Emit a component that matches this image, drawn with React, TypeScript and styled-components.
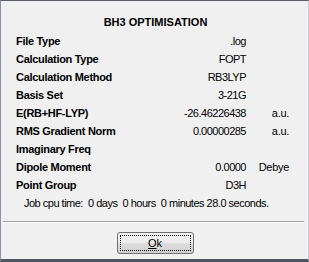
import { createGlobalStyle, styled } from "styled-components";

const GlobalStyle = createGlobalStyle`
	html, body {
		margin: 0;
		padding: 0;
		background: #f0f0f0;
	}
	body {
		font-family: "Liberation Sans", Arial, sans-serif;
		font-size: 11px;
		color: #000;
	}
`;

const Dialog = styled.div`
	box-sizing: border-box;
	width: 309px;
	height: 262px;
	background: #f0f0f0;
	border-top: 1px solid #5a5f66;
	border-left: 1px solid #8a94a0;
	border-right: 1px solid #c9ced4;
	border-bottom: 3px solid #4d5560;
	display: flex;
	flex-direction: column;
	padding-top: 12px;
`;

const Title = styled.div`
	height: 18px;
	line-height: 18px;
	text-align: center;
	font-weight: bold;
	padding-left: 2px;
`;

const Grid = styled.div`
	display: grid;
	grid-template-columns: 130px 1fr 43px;
	grid-auto-rows: 18px;
	align-items: center;
	padding: 1px 19px 0 15px;
	line-height: 18px;
`;

const Label = styled.div`
	font-weight: bold;
	letter-spacing: -0.3px;
	white-space: nowrap;
`;

const Value = styled.div`
	text-align: right;
	letter-spacing: -0.5px;
	white-space: nowrap;
`;

const Unit = styled.div`
	text-align: right;
	letter-spacing: -0.3px;
	white-space: nowrap;
`;

const CpuLine = styled.div`
	height: 18px;
	line-height: 18px;
	padding-left: 23px;
	letter-spacing: -0.5px;
	white-space: pre;
`;

const Separator = styled.div`
	margin: 9px 4px 0 2px;
	height: 1px;
	background: #a0a0a0;
	border-bottom: 1px solid #fff;
`;

const Footer = styled.div`
	display: flex;
	justify-content: center;
	padding-top: 9px;
	padding-left: 1px;
`;

const Button = styled.button`
	box-sizing: border-box;
	width: 77px;
	height: 22px;
	padding: 2px;
	border: 1px solid #707070;
	border-radius: 3px;
	background: linear-gradient(#f2f2f2 0%, #ebebeb 50%, #dddddd 51%, #cfcfcf 100%);
	font-family: "Liberation Sans", Arial, sans-serif;
	font-size: 11px;
	color: #000;
	display: flex;
`;

const FocusRing = styled.span`
	flex: 1;
	border: 1px dotted #000;
	display: flex;
	align-items: center;
	justify-content: center;
	line-height: 14px;
`;

type Row = { label: string; value?: string; unit?: string };

const rows: Row[] = [
	{ label: "File Type", value: ".log" },
	{ label: "Calculation Type", value: "FOPT" },
	{ label: "Calculation Method", value: "RB3LYP" },
	{ label: "Basis Set", value: "3-21G" },
	{ label: "E(RB+HF-LYP)", value: "-26.46226438", unit: "a.u." },
	{ label: "RMS Gradient Norm", value: "0.00000285", unit: "a.u." },
	{ label: "Imaginary Freq" },
	{ label: "Dipole Moment", value: "0.0000", unit: "Debye" },
	{ label: "Point Group", value: "D3H" },
];

export default function App() {
	return (
		<>
			<GlobalStyle />
			<Dialog>
				<Title>BH3 OPTIMISATION</Title>
				<Grid>
					{rows.flatMap((r) => [
						<Label key={r.label + "-l"}>{r.label}</Label>,
						<Value key={r.label + "-v"}>{r.value ?? ""}</Value>,
						<Unit key={r.label + "-u"}>{r.unit ?? ""}</Unit>,
					])}
				</Grid>
				<CpuLine>{"Job cpu time:  0 days  0 hours  0 minutes 28.0 seconds."}</CpuLine>
				<Separator />
				<Footer>
					<Button>
						<FocusRing>
							<u>O</u>k
						</FocusRing>
					</Button>
				</Footer>
			</Dialog>
		</>
	);
}
